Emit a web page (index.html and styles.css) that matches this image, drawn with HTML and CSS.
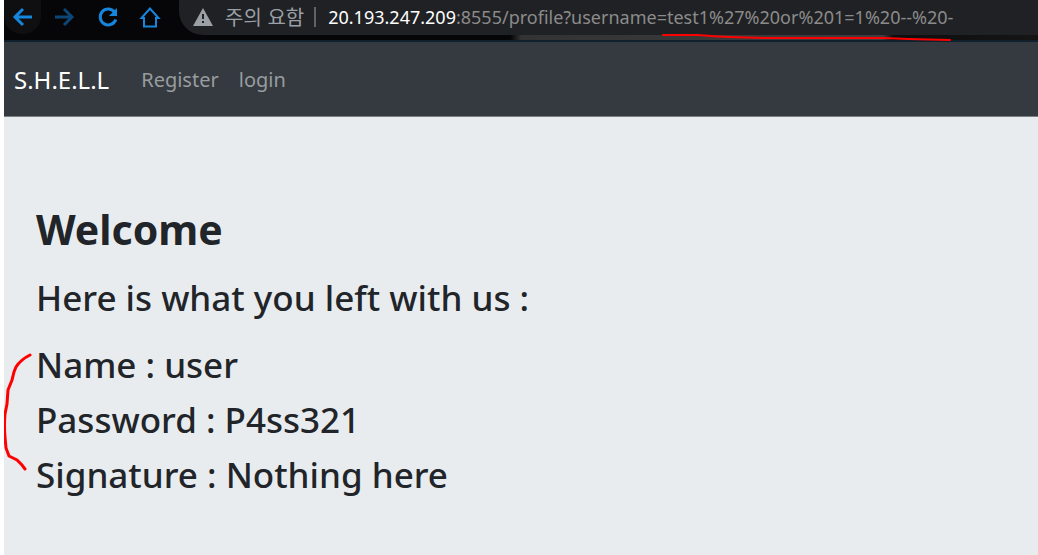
FILE: index.html
```
<!DOCTYPE html>
<html lang="en">
<head>
    <meta charset="UTF-8">
    <meta name="viewport" content="width=device-width, initial-scale=1.0">
    <title>S.H.E.L.L</title>
    <link rel="stylesheet" href="styles.css">
</head>
<body>
    <!-- Browser toolbar -->
    <header class="toolbar">
        <button class="tool back" aria-label="Back">
            <svg width="24" height="24" viewBox="0 0 24 24"><path d="M21 12H4M12 4l-8 8 8 8"/></svg>
        </button>
        <button class="tool forward" aria-label="Forward">
            <svg width="24" height="24" viewBox="0 0 24 24"><path d="M3 12h17M12 4l8 8-8 8"/></svg>
        </button>
        <button class="tool" aria-label="Reload">
            <svg width="24" height="24" viewBox="0 0 24 24"><path d="M18.500 7A8 8 0 1 0 19.800 14.500"/><path class="solid" d="M21 3v8h-8z"/></svg>
        </button>
        <button class="tool" aria-label="Home">
            <svg width="24" height="24" viewBox="0 0 24 24"><path class="house" d="M12 3.500L3.500 13H6v8.500h12V13h2.500z"/></svg>
        </button>
        <div class="address">
            <svg class="alert" width="20" height="18" viewBox="0 0 20 18"><path d="M10 0L20 18H0z"/><path class="mark" d="M9 6h2v5H9zM9 13h2v2H9z"/></svg>
            <span class="notice" lang="ko">주의 요함</span>
            <label class="host" for="path">20.193.247.209</label>
            <input class="path" id="path" type="text" value=":8555/profile?username=test1%27%20or%201=1%20--%20-">
            <svg class="underline" width="290" height="10" viewBox="0 0 290 10"><path d="M1 2L36 2 C60 4 85 5 115 5H222L246 6 288 7"/></svg>
        </div>
    </header>

    <nav class="navbar">
        <a class="brand" href="#">S.H.E.L.L</a>
        <a class="nav-link" href="#">Register</a>
        <a class="nav-link" href="#">login</a>
    </nav>

    <main class="profile">
        <h1>Welcome</h1>
        <h2>Here is what you left with us :</h2>
        <div class="details">
            <h3>Name : user</h3>
            <h3>Password : P4ss321</h3>
            <h3>Signature : Nothing here</h3>
            <svg class="bracket" width="30" height="120" viewBox="0 0 30 120"><path d="M28 2C22 5 17 9 14 14L12 19 10 27 6 37 5 51 3 61Q2 72 3 84L4 95 7 103 15 107 20 112 23 116"/></svg>
        </div>
    </main>
</body>
</html>
```
FILE: styles.css
```
* {
    margin: 0;
    padding: 0;
    box-sizing: border-box;
}

html {
    background: #fff;
}

body {
    min-height: 100vh;
    display: flex;
    flex-direction: column;
    margin-left: 4px;
    background: #e9ecef;
    color: #212529;
    font-family: 'Noto Sans', 'Noto Sans CJK KR', sans-serif;
}

.toolbar {
    display: flex;
    align-items: flex-start;
    height: 42px;
    background: linear-gradient(90deg, #060608 49%, #333 50%, #3e3e3e 85%, #0e0e0e 86%, #151515);
    border-bottom: 2px solid #10202c;
}

.tool {
    flex: none;
    width: 42px;
    height: 34px;
    border: none;
    background: none;
    cursor: pointer;
}

.tool svg {
    display: block;
    margin: 5px auto;
    fill: none;
    stroke: #1686dc;
    stroke-width: 3;
}

.back {
    width: 37px;
    background: #0f0f11;
    border-radius: 0 0 18px 18px;
}

.forward {
    width: 46px;
}

.forward svg {
    stroke: #0d4675;
}

.tool .solid {
    fill: #1686dc;
    stroke: none;
}

.tool .house {
    stroke-width: 2;
}

.address {
    position: relative;
    flex: 1;
    min-width: 0;
    display: flex;
    align-items: center;
    height: 35px;
    margin-left: 8px;
    padding: 0 0 2px 14px;
    background: #202124;
    border-radius: 0 0 0 24px;
    font-size: 18px;
}

.alert {
    flex: none;
    fill: #9aa0a6;
}

.mark {
    fill: #202124;
}

.notice {
    margin-left: 12px;
    padding-right: 10px;
    border-right: 2px solid #5f6368;
    color: #9aa0a6;
    font-family: 'Noto Sans CJK KR', sans-serif;
    font-size: 20px;
    line-height: 20px;
    white-space: nowrap;
}

.host {
    margin-left: 12px;
    color: #fff;
}

.path {
    flex: 1;
    min-width: 0;
    border: none;
    outline: none;
    background: none;
    color: #8b8b8b;
    font: inherit;
}

.underline,
.bracket {
    position: absolute;
    overflow: visible;
    fill: none;
    stroke: #f00;
    stroke-width: 2;
    stroke-linecap: round;
}

.underline {
    top: 33px;
    left: 483px;
}

.navbar {
    display: flex;
    align-items: center;
    height: 75px;
    padding: 0 10px;
    background: #343a40;
    border-bottom: 1px solid #7b7f84;
}

.navbar a {
    text-decoration: none;
}

.brand {
    margin-right: 32px;
    color: #fff;
    font-size: 24px;
}

.nav-link {
    margin-right: 20px;
    color: #999c9f;
    font-size: 20px;
}

.profile {
    padding: 86px 32px 32px;
}

h1 {
    margin-bottom: 15px;
    font-size: 41px;
    line-height: 52px;
}

h2,
h3 {
    font-size: 35px;
    font-weight: 500;
    line-height: 55px;
}

h2 {
    margin-bottom: 12px;
}

.details {
    position: relative;
}

.bracket {
    top: 16px;
    left: -34px;
    stroke-width: 3;
}
```
